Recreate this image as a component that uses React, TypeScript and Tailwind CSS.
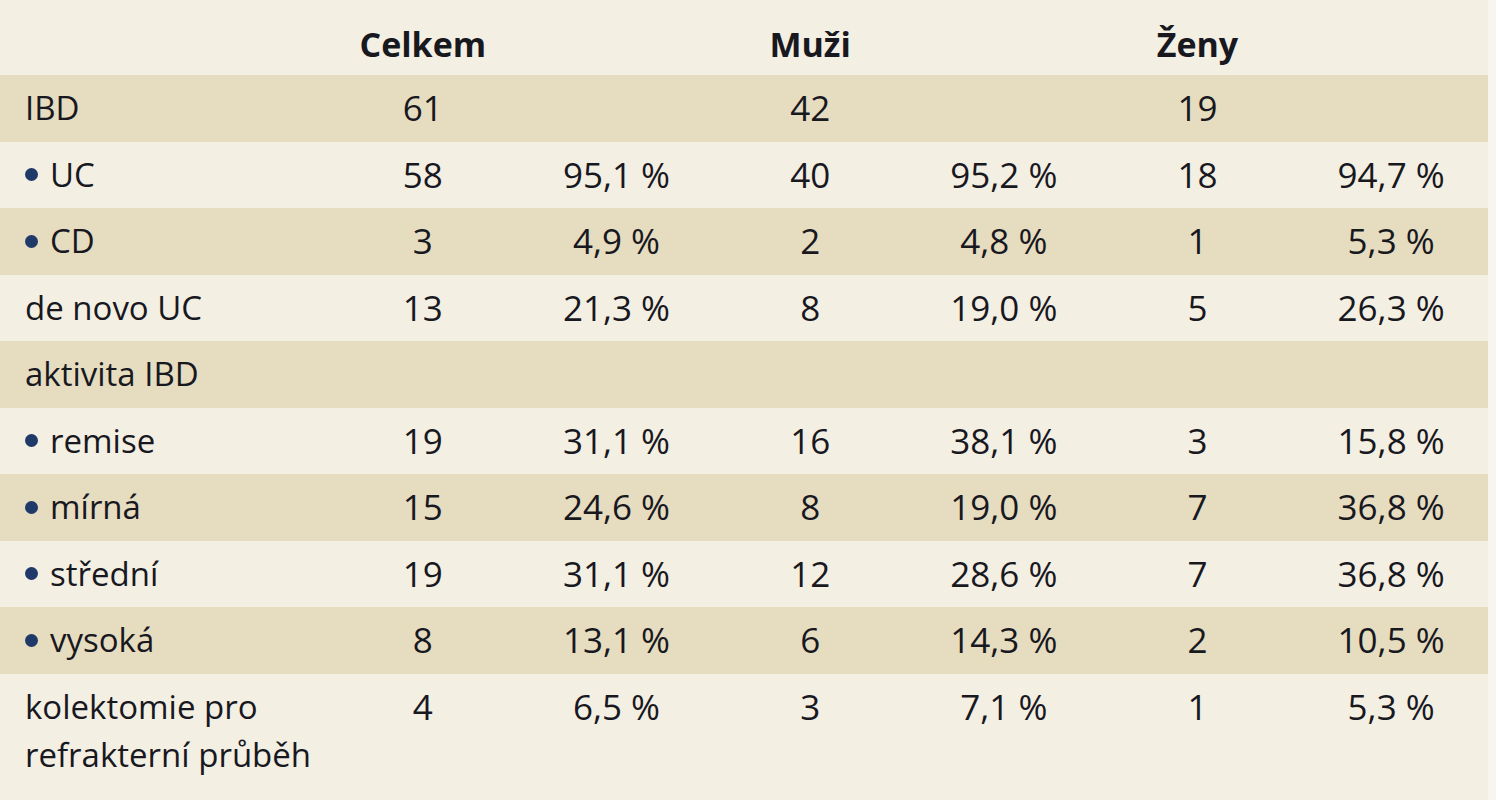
import React from 'react';

type Row = {
  label: string;
  bullet?: boolean;
  values: string[];
  striped?: boolean;
};

const rows: Row[] = [
  { label: 'IBD', values: ['61', '', '42', '', '19', ''], striped: true },
  { label: 'UC', bullet: true, values: ['58', '95,1 %', '40', '95,2 %', '18', '94,7 %'] },
  { label: 'CD', bullet: true, values: ['3', '4,9 %', '2', '4,8 %', '1', '5,3 %'], striped: true },
  { label: 'de novo UC', values: ['13', '21,3 %', '8', '19,0 %', '5', '26,3 %'] },
  { label: 'aktivita IBD', values: ['', '', '', '', '', ''], striped: true },
  { label: 'remise', bullet: true, values: ['19', '31,1 %', '16', '38,1 %', '3', '15,8 %'] },
  { label: 'mírná', bullet: true, values: ['15', '24,6 %', '8', '19,0 %', '7', '36,8 %'], striped: true },
  { label: 'střední', bullet: true, values: ['19', '31,1 %', '12', '28,6 %', '7', '36,8 %'] },
  { label: 'vysoká', bullet: true, values: ['8', '13,1 %', '6', '14,3 %', '2', '10,5 %'], striped: true },
];

const cols = 'grid grid-cols-[326px_repeat(6,minmax(0,1fr))]';

const Num = ({ v }: { v: string }) => (
  <div className="text-center text-[35px]">{v}</div>
);

export default function App() {
  return (
    <div className="min-h-[800px] bg-[#f8f5ef] text-[#18181f] font-['Open_Sans',sans-serif] text-[33px] leading-[48px]">
      <div className="w-[1488px] bg-[#f4efe3]">
        <div className={`${cols} h-[75px] pt-[20px] font-bold text-[34px]`}>
          <div />
          <div className="text-center">Celkem</div>
          <div />
          <div className="text-center">Muži</div>
          <div />
          <div className="text-center">Ženy</div>
          <div />
        </div>

        {rows.map((row) => (
          <div
            key={row.label}
            className={`${cols} h-[66.5px] pt-[9px] ${row.striped ? 'bg-[#e6dcc0]' : ''}`}
          >
            <div className="pl-[25px] flex items-center h-[48px]">
              {row.bullet && (
                <span className="w-[13px] h-[13px] rounded-full bg-[#1f3a68] mr-[12px] shrink-0" />
              )}
              {row.label}
            </div>
            {row.values.map((v, i) => (
              <Num key={i} v={v} />
            ))}
          </div>
        ))}

        <div className={`${cols} min-h-[126.5px] pt-[9px]`}>
          <div className="pl-[25px]">kolektomie pro<br />refrakterní průběh</div>
          {['4', '6,5 %', '3', '7,1 %', '1', '5,3 %'].map((v, i) => (
            <Num key={i} v={v} />
          ))}
        </div>
      </div>
    </div>
  );
}
